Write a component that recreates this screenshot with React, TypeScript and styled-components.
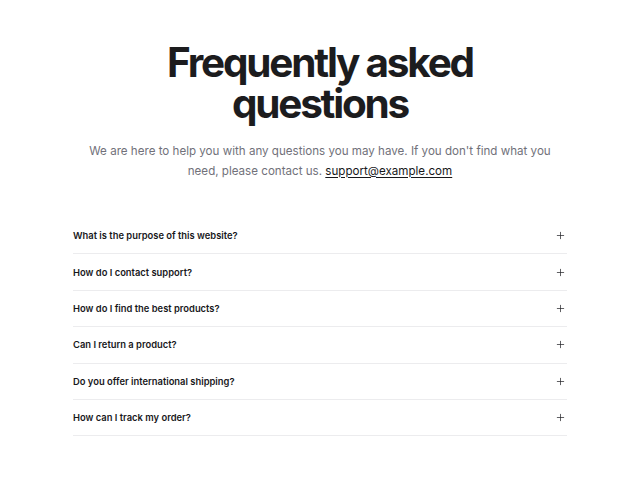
import React from "react";
import styled, { createGlobalStyle } from "styled-components";
import { Plus } from "lucide-react";

const GlobalStyle = createGlobalStyle`
  html, body {
    margin: 0;
    padding: 0;
    background: #ffffff;
  }
  body {
    font-family: Inter, "Liberation Sans", sans-serif;
    color: #18181b;
  }
`;

const Page = styled.main`
  display: flex;
  flex-direction: column;
  align-items: center;
  padding: 42px 73px 0;
`;

const Title = styled.h1`
  margin: 0;
  font-size: 40.5px;
  line-height: 41px;
  font-weight: 700;
  letter-spacing: -0.055em;
  text-align: center;
  color: #1c1c1e;
  max-width: 340px;
`;

const Lead = styled.p`
  margin: 18px 0 0;
  font-size: 11.6px;
  line-height: 19.5px;
  color: #71717a;
  text-align: center;
  max-width: 470px;

  a {
    color: #18181b;
    text-decoration: underline;
    text-underline-offset: 2px;
    text-decoration-thickness: 1px;
  }
`;

const List = styled.div`
  width: 100%;
  margin-top: 37px;
  display: flex;
  flex-direction: column;
`;

const Row = styled.button`
  display: flex;
  align-items: center;
  justify-content: space-between;
  height: 36.4px;
  padding: 0;
  border: none;
  border-bottom: 1px solid #ececee;
  background: transparent;
  font-family: inherit;
  font-size: 9.4px;
  font-weight: 600;
  color: #18181b;
  text-align: left;
  cursor: pointer;

  svg {
    color: #27272a;
    margin-right: 1px;
  }
`;

const questions = [
  "What is the purpose of this website?",
  "How do I contact support?",
  "How do I find the best products?",
  "Can I return a product?",
  "Do you offer international shipping?",
  "How can I track my order?",
];

export default function App() {
  return (
    <>
      <GlobalStyle />
      <Page>
        <Title>Frequently asked questions</Title>
        <Lead>
          We are here to help you with any questions you may have. If you don't
          find what you need, please contact us.{" "}
          <a href="#">support@example.com</a>
        </Lead>
        <List>
          {questions.map((q) => (
            <Row key={q}>
              <span>{q}</span>
              <Plus size={11} strokeWidth={1.6} />
            </Row>
          ))}
        </List>
      </Page>
    </>
  );
}
